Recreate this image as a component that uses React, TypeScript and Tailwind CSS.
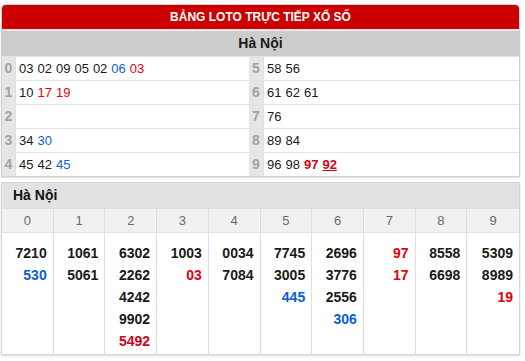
import { FC } from "react";

type Num = { v: string; c?: "b" | "r" | "rb" | "ru" };

const loto: { d: number; nums: Num[] }[] = [
  { d: 0, nums: [{ v: "03" }, { v: "02" }, { v: "09" }, { v: "05" }, { v: "02" }, { v: "06", c: "b" }, { v: "03", c: "r" }] },
  { d: 1, nums: [{ v: "10" }, { v: "17", c: "r" }, { v: "19", c: "r" }] },
  { d: 2, nums: [] },
  { d: 3, nums: [{ v: "34" }, { v: "30", c: "b" }] },
  { d: 4, nums: [{ v: "45" }, { v: "42" }, { v: "45", c: "b" }] },
  { d: 5, nums: [{ v: "58" }, { v: "56" }] },
  { d: 6, nums: [{ v: "61" }, { v: "62" }, { v: "61" }] },
  { d: 7, nums: [{ v: "76" }] },
  { d: 8, nums: [{ v: "89" }, { v: "84" }] },
  { d: 9, nums: [{ v: "96" }, { v: "98" }, { v: "97", c: "rb" }, { v: "92", c: "ru" }] },
];

const tail: Num[][] = [
  [{ v: "7210" }, { v: "530", c: "b" }],
  [{ v: "1061" }, { v: "5061" }],
  [{ v: "6302" }, { v: "2262" }, { v: "4242" }, { v: "9902" }, { v: "5492", c: "rb" }],
  [{ v: "1003" }, { v: "03", c: "r" }],
  [{ v: "0034" }, { v: "7084" }],
  [{ v: "7745" }, { v: "3005" }, { v: "445", c: "b" }],
  [{ v: "2696" }, { v: "3776" }, { v: "2556" }, { v: "306", c: "b" }],
  [{ v: "97", c: "r" }, { v: "17", c: "r" }],
  [{ v: "8558" }, { v: "6698" }],
  [{ v: "5309" }, { v: "8989" }, { v: "19", c: "r" }],
];

const color = (c?: Num["c"]) =>
  c === "b"
    ? "text-[#0b5fcf]"
    : c === "r"
    ? "text-[#e3000f]"
    : c === "rb"
    ? "text-[#d0021b] font-bold"
    : c === "ru"
    ? "text-[#d0021b] font-bold underline"
    : "text-[#1a1a1a]";

const LotoCell: FC<{ d: number; nums: Num[]; wide?: boolean }> = ({ d, nums }) => (
  <>
    <div className="flex items-center justify-center bg-[#e6e6e6] border-r border-[#e0e0e0] text-[14px] font-bold text-[#a3a3a3]">
      {d}
    </div>
    <div className="flex items-center gap-[4px] pl-[3px] text-[13px] bg-white">
      {nums.map((n, i) => (
        <span key={i} className={color(n.c)}>
          {n.v}
        </span>
      ))}
    </div>
  </>
);

const App: FC = () => {
  return (
    <div
      className="w-[525px] h-[361px] bg-white pt-[4px] pl-[1px]"
      style={{ fontFamily: '"Liberation Sans", Arial, sans-serif' }}
    >
      {/* Loto table */}
      <div className="w-[519px] border border-[#cfcfcf] border-b-[#d8cfbd] rounded-t-[5px] shadow-[0_1px_2px_rgba(0,0,0,0.12)]">
        <div className="h-[26px] bg-[#cc0000] rounded-t-[4px] flex items-center justify-center text-white text-[12px] font-bold border-b-2 border-[#e6e6e6]">
          BẢNG LOTO TRỰC TIẾP XỔ SỐ
        </div>
        <div className="h-[25px] bg-[#cccccc] flex items-center justify-center text-[14px] font-bold text-[#1a1a1a]">
          Hà Nội
        </div>
        {loto.slice(0, 5).map((row, i) => (
          <div
            key={row.d}
            className="grid grid-cols-[14px_233px_15px_1fr] h-[24px] border-t border-[#e3e3e3]"
          >
            <LotoCell d={row.d} nums={row.nums} />
            <LotoCell d={loto[i + 5].d} nums={loto[i + 5].nums} />
          </div>
        ))}
      </div>

      {/* Tail table */}
      <div className="w-[519px] mt-[5px] border border-[#d6d6d6] shadow-[0_1px_2px_rgba(0,0,0,0.15)]">
        <div className="h-[25px] bg-[#e2e2e2] flex items-center pl-[11px] text-[14px] font-bold text-[#111]">
          Hà Nội
        </div>
        <div className="grid grid-cols-10 h-[24px] bg-[#f1f1f1] border-t border-[#e0e0e0]">
          {tail.map((_, i) => (
            <div
              key={i}
              className="flex items-center justify-center text-[13px] text-[#6b6b6b] border-r border-[#dddddd] last:border-r-0"
            >
              {i}
            </div>
          ))}
        </div>
        <div className="grid grid-cols-10 h-[122px] border-t border-[#e0e0e0]">
          {tail.map((col, i) => (
            <div
              key={i}
              className="flex flex-col items-end pt-[9px] pr-[6px] border-r border-[#dddddd] last:border-r-0 text-[14px] font-bold leading-[22px]"
            >
              {col.map((n, j) => (
                <span key={j} className={color(n.c)}>
                  {n.v}
                </span>
              ))}
            </div>
          ))}
        </div>
      </div>
    </div>
  );
};

export default App;
